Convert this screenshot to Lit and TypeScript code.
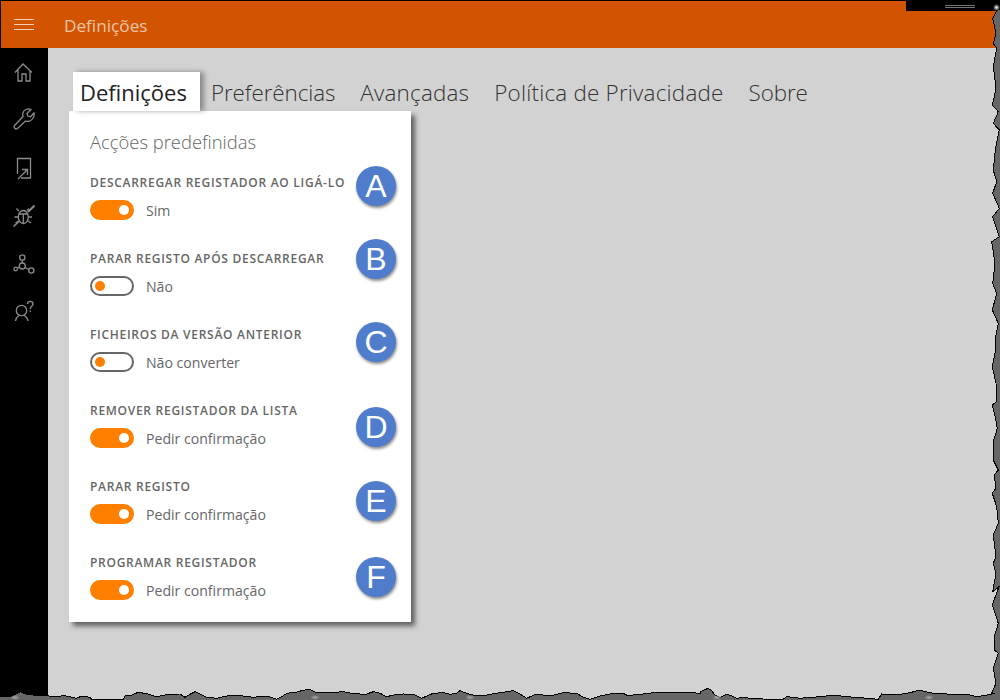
import { LitElement, html, css, svg } from "lit";
import { customElement } from "lit/decorators.js";

const z5 = [[30,290],[45,284],[60,275],[80,283],[100,285],[130,285],[160,290],[195,287],[230,295],[245,288],[270,292],[275,298],[370,298],[375,288],[395,285],[415,277],[440,281],[470,290],[505,283],[540,282],[555,292],[570,283],[585,275],[600,282],[620,292],[650,295],[680,288],[720,287],[760,292],[800,288],[830,298],[845,290],[860,280],[900,275]];
const z10 = [[0,62],[30,58],[50,68],[90,68],[130,65],[155,70],[180,72],[200,72],[220,65],[240,70],[260,80],[285,74],[310,72],[340,73],[365,85],[380,78],[400,70],[430,68],[450,73],[470,70],[480,62],[500,70],[520,75],[560,75],[600,68],[640,62],[660,72],[680,85],[695,78],[710,72],[750,78],[790,68],[830,70],[850,82],[870,88],[900,78],[930,72],[970,70],[985,78],[1000,75],[1030,72],[1060,68],[1100,68],[1150,66],[1200,70]];
const z6 = [[0,275],[25,265],[35,272],[45,285],[60,292],[80,283],[95,288],[110,295],[130,292],[160,296],[190,297],[250,298],[260,290],[280,292],[300,295],[330,292],[365,290],[400,285],[440,290],[480,293],[535,298],[545,282],[570,283],[600,283],[630,278],[660,270],[680,276],[700,280],[730,280],[760,285],[800,282],[830,290],[860,285],[885,280]];
const r9 = [[107,0],[97,50],[108,100],[110,155],[97,165],[106,200],[112,235],[100,275],[100,330],[115,360],[103,375],[108,415],[97,430],[110,470],[115,520],[100,555],[104,590],[108,620],[100,640],[108,670],[98,725],[117,710],[97,765],[115,820],[103,860],[103,900],[115,910],[100,955],[108,1000],[95,1030]];
const r8 = [[110,32],[98,55],[108,100],[100,130],[110,145],[100,200],[105,240],[105,280],[97,315],[115,335],[100,370],[118,390],[106,450],[100,510],[110,545],[98,580],[118,625],[98,650],[118,710],[95,725],[105,790],[98,850],[110,880],[97,930],[115,970],[105,1020]];

function torn(): string {
  const pts: number[][] = [];
  r8.forEach(([x, y]) => pts.push([960 + x / 3, y / 3]));
  r9.forEach(([x, y]) => pts.push([960 + x / 3, 350 + y / 3]));
  [...z6].reverse().forEach(([x, y]) => pts.push([700 + x / 3, 600 + y / 3]));
  [...z10].reverse().forEach(([x, y]) => pts.push([300 + x / 3, 670 + y / 3]));
  [...z5].reverse().forEach(([x, y]) => pts.push([x / 3, 600 + y / 3]));
  return pts.map(([x, y]) => `${x.toFixed(1)},${y.toFixed(1)}`).join(" ");
}
const edge = torn();
const outer = `1000,10 1000,700 0,700 0,697 10,697 ` + edge.split(" ").reverse().join(" ");

const icons = [
  svg`<path d="M15 24.5 L23 16 L32 24.5 M18 22 V33 H22 V26 H26 V33 H30 V22"/>`,
  svg`<path d="M14.6 29.5 L23 20.5 C21.5 15.5 26 11.5 31 13.5 L27 17.5 L27.8 20 L30.5 20.8 L34 17 C35 22 30 27 25.5 25 L17.5 32.5 C15.5 34 13 31.5 14.6 29.5 Z"/>`,
  svg`<path d="M17.5 30 V14.5 H30.5 V34 H21 M18 35 L27 26 M22 25.5 H27.5 V31"/>`,
  svg`<ellipse cx="23.3" cy="25" rx="5" ry="6.5"/><path d="M18.5 22 H28 M23.3 22 V31.5 M19 19 L16.5 16.5 M27 18.5 L29 16.5 M18 25 H14.5 M28.5 25 H32 M18.5 29 L15.5 31 M28 29 L31 31"/><path d="M28 20 L34.5 13.5" stroke-width="2"/><path d="M13.5 34.5 L19 29.5" stroke-width="1.6"/>`,
  svg`<circle cx="22.3" cy="17.5" r="2.6"/><circle cx="22.3" cy="26" r="3"/><circle cx="15.7" cy="29" r="1.8"/><circle cx="31.3" cy="30.5" r="2.6"/><path d="M22.3 20 V23 M19.5 27 L17.4 28.3 M25 27.5 L29 29.5"/>`,
  svg`<circle cx="21.5" cy="22.5" r="5.2"/><path d="M15.5 33 C16 29.5 18 28.2 19 27.5 M28 33 C27.5 29.5 25.5 28.2 24.2 27.5"/><path d="M27.5 16 C27.5 12.5 33 12.5 33 16 C33 18.5 30.2 18 30.2 21 M30.2 22.5 V24"/>`,
];

const rows = [
  { label: "Descarregar registador ao ligá-lo", on: true, value: "Sim", mark: "A", offset: -9 },
  { label: "Parar registo após descarregar", on: false, value: "Não", mark: "B", offset: -12 },
  { label: "Ficheiros da versão anterior", on: false, value: "Não converter", mark: "C", offset: -5 },
  { label: "Remover registador da lista", on: true, value: "Pedir confirmação", mark: "D", offset: 4 },
  { label: "Parar registo", on: true, value: "Pedir confirmação", mark: "E", offset: 2 },
  { label: "Programar registador", on: true, value: "Pedir confirmação", mark: "F", offset: 2 },
];

@customElement("app-root")
export class AppRoot extends LitElement {
  static styles = css`
    :host {
      display: block;
      position: relative;
      width: 1000px;
      height: 700px;
      overflow: hidden;
      background: #000;
      font-family: "Open Sans", "Noto Sans", sans-serif;
    }
    .titlebar {
      height: 47px;
      margin: 1px 0 0 1px;
      background: #d35400;
      display: flex;
      align-items: center;
      color: #ecc4aa;
    }
    .burger {
      width: 48px;
      height: 47px;
      display: flex;
      flex-direction: column;
      align-items: center;
      justify-content: center;
      gap: 4px;
      margin-left: -1px;
    }
    .burger i {
      display: block;
      width: 20px;
      height: 1px;
      background: #f2d2bd;
    }
    .title {
      margin-left: 16px;
      padding-top: 2px;
      font-size: 17.2px;
      line-height: 45px;
    }
    .winctl {
      position: absolute;
      left: 906px;
      top: 0;
      width: 94px;
      height: 11px;
      background: #000;
    }
    .winctl i {
      position: absolute;
      left: 39px;
      width: 30px;
      height: 1px;
      background: #777;
    }
    .body {
      display: flex;
      height: 652px;
    }
    .side {
      width: 48px;
      flex: none;
      background: #000;
    }
    .side svg {
      display: block;
      width: 48px;
      height: 48px;
      fill: none;
      stroke: #8c8c8c;
      stroke-width: 1.3;
    }
    .main {
      flex: 1;
      background: #d2d2d2;
      padding: 24px 0 0 21px;
    }
    .tabs {
      display: flex;
      height: 39px;
      margin-left: 4px;
      font-size: 22.4px;
      line-height: 41px;
    }
    .tab {
      margin-right: 25px;
      white-space: nowrap;
      font-weight: 300;
      color: #333;
      letter-spacing: -0.08px;
    }
    .tab.wide {
      letter-spacing: 0.22px;
    }
    .tab.active {
      margin-right: 11px;
      padding: 0 13px 0 7px;
      background: #fff;
      color: #222;
      font-size: 22px;
      font-weight: 400;
      letter-spacing: 0;
      box-shadow: 4px 0 5px rgba(0, 0, 0, 0.35);
    }
    .card {
      width: 342px;
      box-sizing: border-box;
      padding: 17px 0 22px 21px;
      background: #fff;
      box-shadow: 4px 4px 5px rgba(0, 0, 0, 0.55);
    }
    h2 {
      margin: 0 0 19px;
      font-size: 18.4px;
      line-height: 28px;
      font-weight: 300;
      color: #666;
    }
    .row {
      position: relative;
    }
    .row + .row {
      margin-top: 31px;
    }
    .label {
      font-size: 12px;
      line-height: 16px;
      font-weight: 600;
      letter-spacing: 0.72px;
      text-transform: uppercase;
      color: #666;
      white-space: nowrap;
    }
    .ctl {
      display: flex;
      align-items: center;
      gap: 12px;
      margin-top: 9px;
      height: 20px;
      font-size: 14.1px;
      color: #666;
    }
    .sw {
      width: 44px;
      height: 20px;
      box-sizing: border-box;
      border-radius: 10px;
      border: 2px solid #666;
      display: flex;
      align-items: center;
      padding: 0 3px;
    }
    .sw i {
      display: block;
      width: 10px;
      height: 10px;
      border-radius: 50%;
      background: #ff8000;
    }
    .sw.on {
      background: #ff8000;
      border-color: #ff8000;
      justify-content: flex-end;
    }
    .sw.on i {
      background: #fff;
    }
    .mark {
      position: absolute;
      left: 266px;
      width: 40px;
      height: 40px;
      border-radius: 50%;
      background: #4f7dcc;
      box-shadow: 1px 2px 3px rgba(0, 0, 0, 0.45);
      color: #fff;
      font-family: "Liberation Sans", Arial, sans-serif;
      font-size: 32px;
      line-height: 40px;
      text-align: center;
    }
    .edge {
      position: absolute;
      inset: 0;
      width: 1000px;
      height: 700px;
      pointer-events: none;
    }
    .edge polygon {
      fill: #666;
      stroke: none;
    }
    .edge polyline {
      fill: none;
      stroke: #000;
      stroke-width: 1;
    }
    .glow {
      position: absolute;
      width: 10px;
      height: 5px;
      top: 695px;
      background: radial-gradient(closest-side, #aaa, rgba(160, 160, 160, 0));
    }
    .glow.corner {
      left: 993px;
      top: 4px;
      width: 7px;
      height: 7px;
      background: radial-gradient(closest-side, #fff, rgba(255, 255, 255, 0));
    }
  `;

  render() {
    return html`
      <div class="titlebar">
        <div class="burger"><i></i><i></i><i></i></div>
        <div class="title">Definições</div>
      </div>
      <div class="body">
        <nav class="side">
          ${icons.map((i) => html`<svg viewBox="0 0 48 48">${i}</svg>`)}
        </nav>
        <main class="main">
          <div class="tabs">
            <div class="tab active">Definições</div>
            <div class="tab">Preferências</div>
            <div class="tab wide">Avançadas</div>
            <div class="tab wide">Política de Privacidade</div>
            <div class="tab">Sobre</div>
          </div>
          <section class="card">
            <h2>Acções predefinidas</h2>
            ${rows.map(
              (r) => html`
                <div class="row">
                  <div class="label">${r.label}</div>
                  <div class="ctl">
                    <div class="sw ${r.on ? "on" : ""}"><i></i></div>
                    <span>${r.value}</span>
                  </div>
                  <div class="mark" style="top:${r.offset}px">${r.mark}</div>
                </div>
              `
            )}
          </section>
        </main>
      </div>
      <div class="winctl"><i style="top:5px"></i><i style="top:7px"></i></div>
      <svg class="edge" viewBox="0 0 1000 700" shape-rendering="crispEdges">
        <polygon points="${outer}"></polygon>
        <polyline points="${edge}"></polyline>
      </svg>
      <div class="glow" style="left:10px"></div>
      <div class="glow" style="left:310px"></div>
      <div class="glow" style="left:465px"></div>
      <div class="glow" style="left:712px"></div>
      <div class="glow" style="left:924px"></div>
      <div class="glow corner"></div>
    `;
  }
}
